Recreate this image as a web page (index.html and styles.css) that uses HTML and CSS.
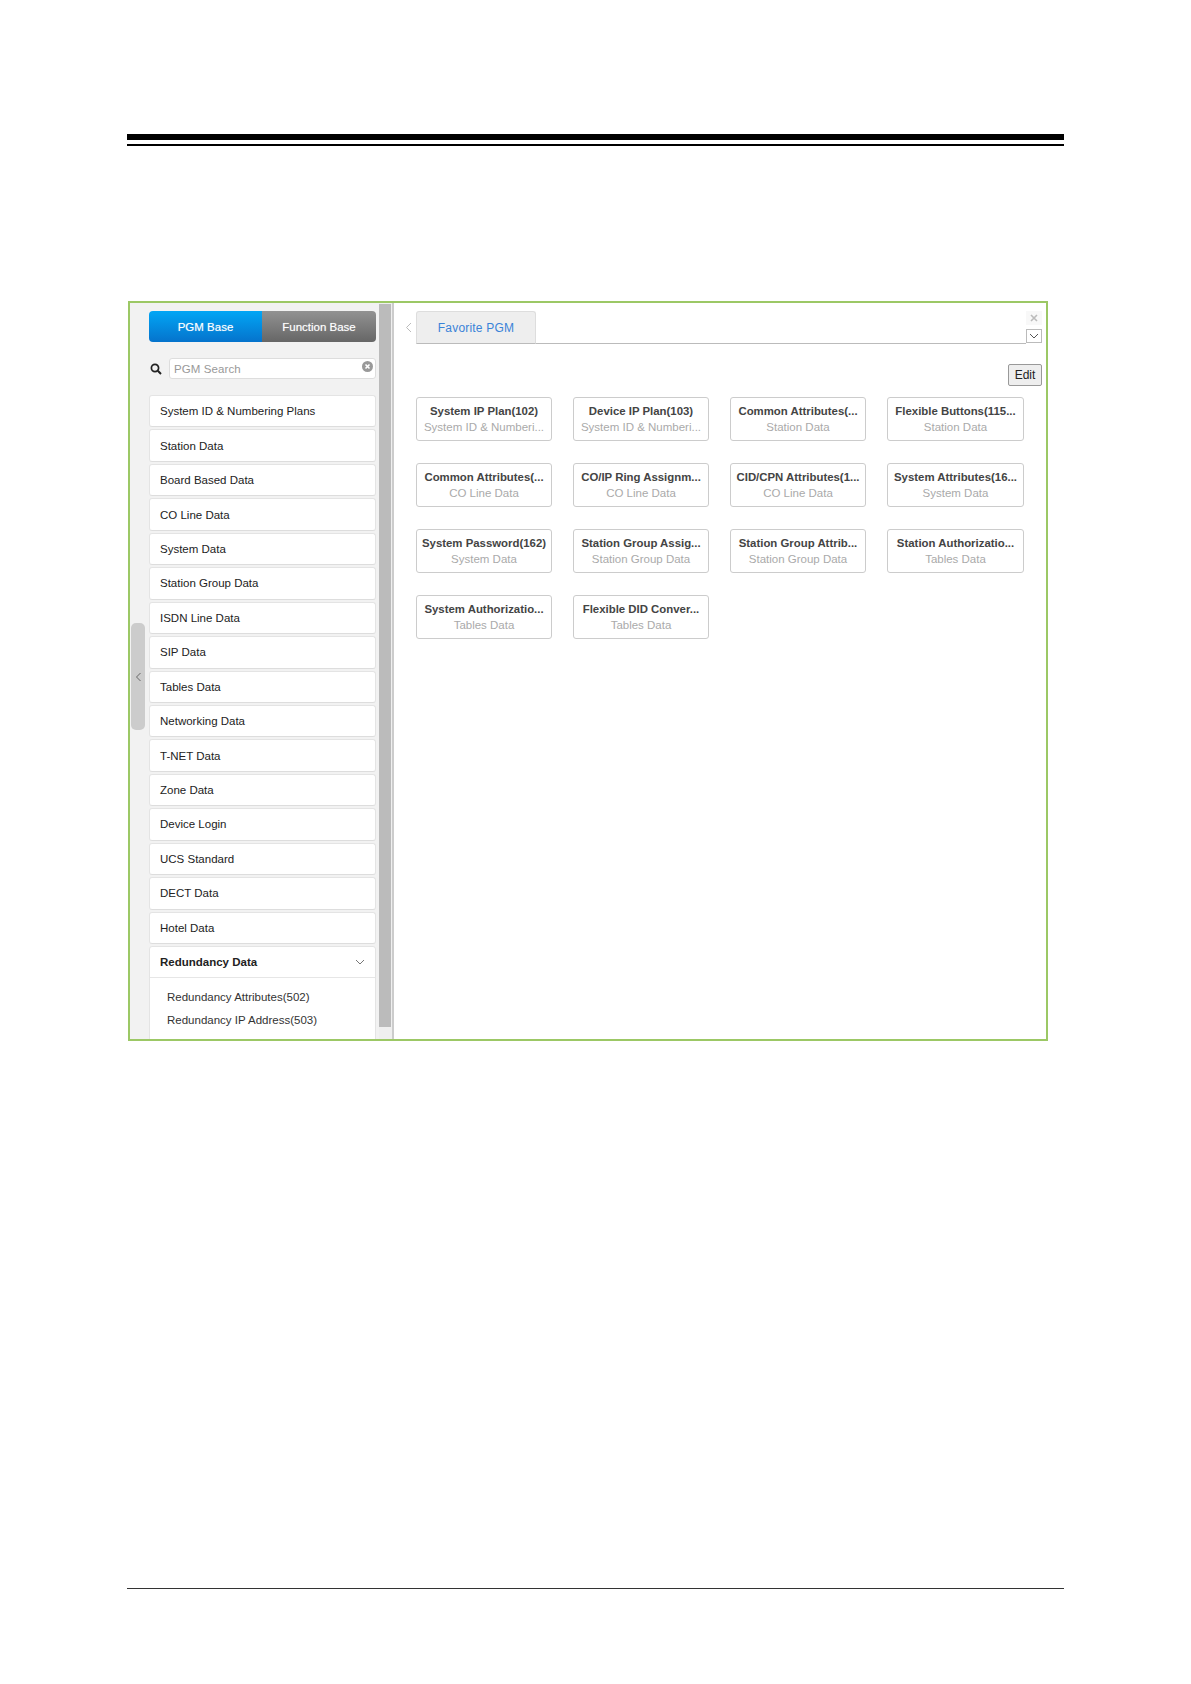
FILE: index.html
```html
<!DOCTYPE html>
<html lang="en">
<head>
<meta charset="utf-8">
<title>PGM Base</title>
<link rel="stylesheet" href="styles.css">
</head>
<body>
<div class="page">
  <div class="rule-top"></div>
  <div class="frame">
    <aside class="sidebar">
      <div class="handle"><svg class="handle-icon" width="7" height="10" viewBox="0 0 7 10"><path d="M5.5 1 1.5 5l4 4" fill="none" stroke="#666" stroke-width="1"/></svg></div>
      <div class="side-main">
        <div class="switch">
          <div class="switch-btn on">PGM Base</div>
          <div class="switch-btn off">Function Base</div>
        </div>
        <div class="search">
          <svg class="search-icon" width="12" height="12" viewBox="0 0 12 12"><circle cx="5" cy="5" r="3.6" fill="none" stroke="#222" stroke-width="1.7"/><path d="M7.8 7.8 11 11" stroke="#222" stroke-width="2"/></svg>
          <div class="search-box">
            <span>PGM Search</span>
            <svg class="clear-icon" width="11" height="11" viewBox="0 0 11 11"><circle cx="5.5" cy="5.5" r="5.5" fill="#999"/><path d="M3.5 3.5l4 4M7.5 3.5l-4 4" stroke="#fff" stroke-width="1.6"/></svg>
          </div>
        </div>
        <ul class="menu">
          <li class="menu-item">System ID &amp; Numbering Plans</li>
          <li class="menu-item">Station Data</li>
          <li class="menu-item">Board Based Data</li>
          <li class="menu-item">CO Line Data</li>
          <li class="menu-item">System Data</li>
          <li class="menu-item">Station Group Data</li>
          <li class="menu-item">ISDN Line Data</li>
          <li class="menu-item">SIP Data</li>
          <li class="menu-item">Tables Data</li>
          <li class="menu-item">Networking Data</li>
          <li class="menu-item">T-NET Data</li>
          <li class="menu-item">Zone Data</li>
          <li class="menu-item">Device Login</li>
          <li class="menu-item">UCS Standard</li>
          <li class="menu-item">DECT Data</li>
          <li class="menu-item">Hotel Data</li>
          <li class="menu-open">
            <div class="menu-head">
              <span>Redundancy Data</span>
              <svg width="10" height="6" viewBox="0 0 10 6"><path d="M1 1l4 4 4-4" fill="none" stroke="#777" stroke-width="1"/></svg>
            </div>
            <div class="menu-sub">
              <div>Redundancy Attributes(502)</div>
              <div>Redundancy IP Address(503)</div>
            </div>
          </li>
        </ul>
      </div>
      <div class="scrollbar"><div class="thumb"></div></div>
    </aside>
    <main class="content">
      <div class="tabbar">
        <div class="tab-prev"><svg width="7" height="11" viewBox="0 0 7 11"><path d="M6 1 1.5 5.5 6 10" fill="none" stroke="#bbb" stroke-width="1"/></svg></div>
        <div class="tabstrip"><div class="tab">Favorite PGM</div></div>
        <div class="tab-tools">
          <div class="tool tool-close"><svg width="8" height="8" viewBox="0 0 8 8"><path d="M1 1l6 6M7 1 1 7" stroke="#bbb" stroke-width="1.6"/></svg></div>
          <div class="tool tool-down"><svg width="10" height="6" viewBox="0 0 10 6"><path d="M1 1l4 4 4-4" fill="none" stroke="#555" stroke-width="1"/></svg></div>
        </div>
      </div>
      <div class="edit-row"><div class="edit">Edit</div></div>
      <div class="cards">
        <div class="card"><b>System IP Plan(102)</b><span>System ID &amp; Numberi...</span></div>
        <div class="card"><b>Device IP Plan(103)</b><span>System ID &amp; Numberi...</span></div>
        <div class="card"><b>Common Attributes(...</b><span>Station Data</span></div>
        <div class="card"><b>Flexible Buttons(115...</b><span>Station Data</span></div>
        <div class="card"><b>Common Attributes(...</b><span>CO Line Data</span></div>
        <div class="card"><b>CO/IP Ring Assignm...</b><span>CO Line Data</span></div>
        <div class="card"><b>CID/CPN Attributes(1...</b><span>CO Line Data</span></div>
        <div class="card"><b>System Attributes(16...</b><span>System Data</span></div>
        <div class="card"><b>System Password(162)</b><span>System Data</span></div>
        <div class="card"><b>Station Group Assig...</b><span>Station Group Data</span></div>
        <div class="card"><b>Station Group Attrib...</b><span>Station Group Data</span></div>
        <div class="card"><b>Station Authorizatio...</b><span>Tables Data</span></div>
        <div class="card"><b>System Authorizatio...</b><span>Tables Data</span></div>
        <div class="card"><b>Flexible DID Conver...</b><span>Tables Data</span></div>
      </div>
    </main>
  </div>
  <div class="rule-bottom"></div>
</div>
</body>
</html>
```
FILE: styles.css
```css
* { box-sizing: border-box; }
html, body { margin: 0; padding: 0; background: #fff; }
body { font-family: "Liberation Sans", Arial, sans-serif; font-size: 11.5px; color: #222; }
.page { width: 937px; margin-left: 127px; padding-top: 134px; height: 1684px; }
.rule-top { height: 12px; border-top: 6px solid #000; border-bottom: 2px solid #000; }
.frame { display: flex; width: 920px; height: 740px; margin: 155px 0 0 1px; border: 2px solid #9cc865; background: #fff; overflow: hidden; }
.rule-bottom { height: 1px; margin-top: 547px; background: #333; }

.sidebar { position: relative; display: flex; width: 264px; flex: none; background: #f2f2f2; border-right: 2px solid #ccc; }
.handle { position: absolute; left: 1px; top: 320px; display: flex; align-items: center; justify-content: center; width: 14px; height: 107px; background: #ccc; border-radius: 5px; }
.side-main { width: 249px; flex: none; padding: 8px 0 0 19px; }
.scrollbar { display: flex; flex-direction: column; width: 13px; flex: none; padding: 1px 1px 12px 0; background: #efefef; }
.thumb { flex: 1; background: #bbb; }

.switch { display: flex; width: 227px; height: 31px; border-radius: 4px; overflow: hidden; color: #fff; }
.switch-btn { display: flex; align-items: center; justify-content: center; text-shadow: 0 0 1px rgba(255,255,255,.5); }
.on { width: 113px; background: linear-gradient(#02a6f5, #0573cc); }
.off { flex: 1; background: linear-gradient(#929292, #666); }
.search { display: flex; align-items: center; gap: 7px; margin-top: 16px; height: 21px; padding-left: 1px; }
.search-icon { flex: none; }
.search-box { position: relative; flex: none; display: flex; align-items: center; width: 207px; height: 21px; padding-left: 4px; background: #fff; border: 1px solid #ddd; border-radius: 3px; color: #999; letter-spacing: .1px; }
.clear-icon { position: absolute; right: 2px; top: 2px; }

.menu { list-style: none; margin: 16px 0 0; padding: 0; width: 227px; }
.menu-item, .menu-head { display: flex; align-items: center; }
.menu-item { height: 32.45px; margin-bottom: 2px; padding-left: 10px; background: #fff; border: 1px solid #e4e4e4; border-bottom-color: #ddd; border-radius: 3px; }
.menu-open { background: #fff; border: 1px solid #e4e4e4; border-radius: 3px 3px 0 0; height: 110px; margin-top: 1px; }
.menu-head { justify-content: space-between; height: 31px; padding: 0 10px; border-bottom: 1px solid #e6e6e6; font-weight: bold; font-size: 11.5px; }
.menu-sub { padding: 8px 0 0 17px; line-height: 22.5px; color: #333; }

.content { flex: 1; padding: 8px 4px 0 0; }
.tabbar { display: flex; height: 33px; }
.tab-prev { display: flex; align-items: center; justify-content: center; width: 22px; padding-left: 6px; flex: none; }
.tabstrip { flex: 1; border-bottom: 1px solid #bbb; }
.tab { display: flex; align-items: center; justify-content: center; width: 120px; height: 33px; background: #eee; border: 1px solid #ddd; border-bottom: 1px solid #bbb; border-radius: 3px 3px 0 0; color: #3a83d8; font-size: 12px; letter-spacing: .2px; }
.tab-tools { display: flex; flex-direction: column; justify-content: space-between; width: 16px; flex: none; padding-bottom: 1px; }
.tool { display: flex; align-items: center; justify-content: center; width: 16px; height: 14px; }
.tool-close { background: #f8f8f8; }
.tool-down { background: #fff; border: 1px solid #bbb; }
.edit-row { display: flex; justify-content: flex-end; margin-top: 20px; }
.edit { display: flex; align-items: center; justify-content: center; width: 34px; height: 22px; background: #eee; border: 1px solid #999; border-radius: 2px; color: #222; font-size: 12px; }
.cards { display: grid; grid-template-columns: 136px 136px 136px 137px; grid-auto-rows: 44px; column-gap: 21px; row-gap: 22px; margin: 11px 0 0 22px; }
.card { display: flex; flex-direction: column; align-items: center; justify-content: center; gap: 2px; border: 1px solid #ccc; border-radius: 3px; white-space: nowrap; line-height: 14px; }
.card:nth-child(-n+4) { padding-bottom: 1px; }
.card b { color: #444; font-size: 11.4px; }
.card span { color: #aaa; }
```
